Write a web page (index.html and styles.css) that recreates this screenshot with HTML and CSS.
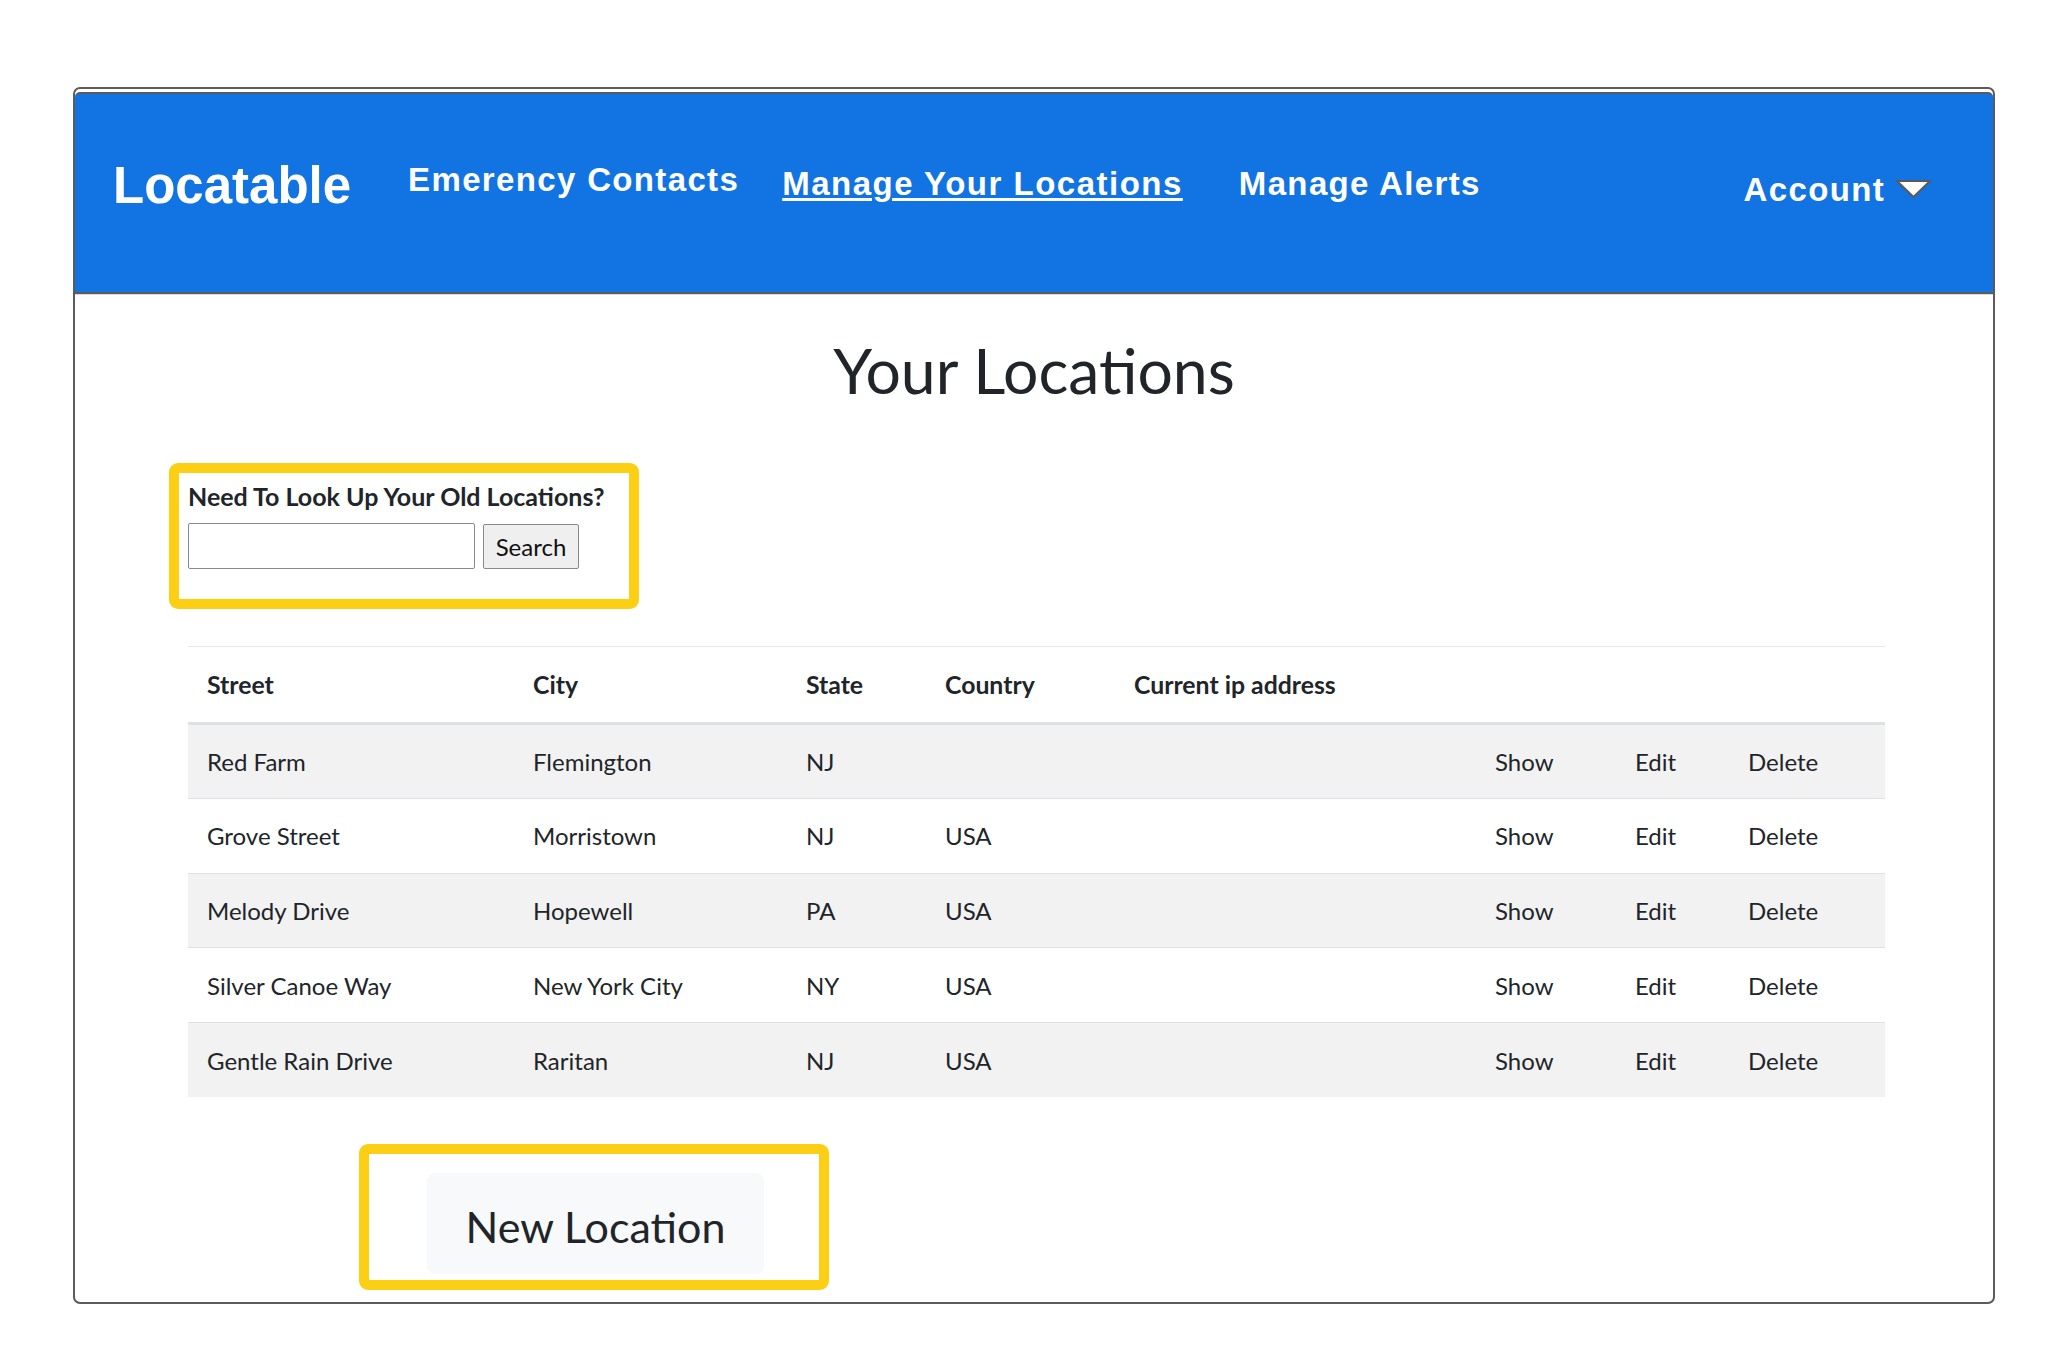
FILE: index.html
```html
<!DOCTYPE html>
<html lang="en">
<head>
<meta charset="utf-8">
<title>Your Locations</title>
<link rel="stylesheet" href="styles.css">
</head>
<body>
<div class="frame">
  <header class="navbar">
    <a class="brand" href="#">Locatable</a>
    <a class="nav-link nav-contacts" href="#">Emerency Contacts</a>
    <a class="nav-link nav-locations" href="#">Manage Your Locations</a>
    <a class="nav-link nav-alerts" href="#">Manage Alerts</a>
    <a class="nav-link nav-account" href="#"><span>Account</span><svg class="caret" width="37" height="20" viewBox="0 0 37 20"><polygon points="2,2 35,2 18.5,18" fill="#fff" stroke="#5a5a5a" stroke-width="2" stroke-linejoin="round"/></svg></a>
  </header>
  <main class="content">
    <h1 class="title">Your Locations</h1>
    <div class="highlight search-highlight">
      <form class="search-form">
        <label class="search-label" for="q">Need To Look Up Your Old Locations?</label>
        <div class="search-row">
          <input id="q" class="search-input" type="text">
          <button class="search-btn" type="button">Search</button>
        </div>
      </form>
    </div>
    <table class="locations">
      <colgroup>
        <col class="c-street"><col class="c-city"><col class="c-state"><col class="c-country"><col class="c-ip"><col class="c-show"><col class="c-edit"><col class="c-delete">
      </colgroup>
      <thead>
        <tr><th>Street</th><th>City</th><th>State</th><th>Country</th><th colspan="4">Current ip address</th></tr>
      </thead>
      <tbody>
        <tr><td>Red Farm</td><td>Flemington</td><td>NJ</td><td></td><td></td><td><a href="#">Show</a></td><td><a href="#">Edit</a></td><td><a href="#">Delete</a></td></tr>
        <tr><td>Grove Street</td><td>Morristown</td><td>NJ</td><td>USA</td><td></td><td><a href="#">Show</a></td><td><a href="#">Edit</a></td><td><a href="#">Delete</a></td></tr>
        <tr><td>Melody Drive</td><td>Hopewell</td><td>PA</td><td>USA</td><td></td><td><a href="#">Show</a></td><td><a href="#">Edit</a></td><td><a href="#">Delete</a></td></tr>
        <tr><td>Silver Canoe Way</td><td>New York City</td><td>NY</td><td>USA</td><td></td><td><a href="#">Show</a></td><td><a href="#">Edit</a></td><td><a href="#">Delete</a></td></tr>
        <tr><td>Gentle Rain Drive</td><td>Raritan</td><td>NJ</td><td>USA</td><td></td><td><a href="#">Show</a></td><td><a href="#">Edit</a></td><td><a href="#">Delete</a></td></tr>
      </tbody>
    </table>
    <div class="highlight new-highlight">
      <a class="new-btn" href="#">New Location</a>
    </div>
  </main>
</div>
</body>
</html>
```
FILE: styles.css
```css
* { box-sizing: border-box; }
html, body { margin: 0; padding: 0; background: #fff; }
body { font-family: Lato, "Open Sans", sans-serif; color: #212529; }

.frame {
  margin: 87px 0 0 73px;
  width: 1922px;
  border: 2px solid #5b5b5b;
  border-radius: 7px;
  padding-bottom: 12px;
  overflow: hidden;
}

.navbar {
  display: flex;
  align-items: flex-start;
  margin-top: 3px;
  height: 202px;
  background: #1273e3;
  border-top: 2px solid #5b5b5b;
  border-bottom: 2px solid #5b5b5b;
  border-radius: 5px 5px 0 0;
  padding: 66px 61px 0 38px;
  font-family: "Liberation Sans", Arial, sans-serif;
  font-weight: bold;
  box-shadow: 0 1px 0 #dcdcdc;
}
.navbar a { color: #fff; text-decoration: none; line-height: 1; white-space: nowrap; }
.brand { font-size: 51px; }
.nav-link { font-size: 33px; letter-spacing: 1.35px; }
.nav-contacts { margin: 3px 0 0 57px; }
.nav-locations {
  margin: 7px 0 0 43px;
  text-decoration: underline !important;
  text-decoration-thickness: 3px !important;
  text-underline-offset: 3px;
  letter-spacing: 1.5px;
}
.nav-alerts { margin: 7px 0 0 56px; }
.nav-account { margin: 13px 0 0 auto; display: inline-flex; align-items: flex-start; }
.caret { margin: 6px 0 0 10px; }

.title {
  margin: 38px 0 0;
  text-align: center;
  font-size: 62.5px;
  font-weight: 400;
  line-height: 1.2;
}

.highlight {
  width: 470px;
  height: 146px;
  border: 10px solid #fcce14;
  border-radius: 9px;
}
.search-highlight { margin: 56px 0 0 94px; padding: 8px 0 0 9px; }
.search-label { display: block; font-size: 25px; font-weight: 700; line-height: 1.2; }
.search-row { display: flex; align-items: flex-start; gap: 8px; margin-top: 12px; }
.search-input {
  width: 287px; height: 46px;
  border: 1px solid #8a8a8a; border-radius: 2px;
  background: #fff; margin: 0;
}
.search-btn {
  width: 96px; height: 45px; margin: 1px 0 0;
  background: #efefef; border: 1px solid #8a8a8a; border-radius: 2px;
  font-family: Lato, "Open Sans", sans-serif; font-size: 24px; color: #111;
  padding: 0;
}

.locations {
  margin: 37px 0 0 113px;
  width: 1697px;
  border-collapse: collapse;
  table-layout: fixed;
  font-size: 24px;
}
.c-street { width: 326px; }
.c-city { width: 273px; }
.c-state { width: 139px; }
.c-country { width: 189px; }
.c-ip { width: 361px; }
.c-show { width: 140px; }
.c-edit { width: 113px; }
.c-delete { width: 156px; }
.locations th {
  text-align: left; font-weight: 700; font-size: 24.8px;
  height: 77px; padding: 0 0 0 19px;
  border-top: 1px solid #e4e7eb;
  border-bottom: 3px solid #dee2e6;
  vertical-align: middle;
}
.locations td {
  height: 74.8px; padding: 0 0 0 19px;
  border-top: 1px solid #dee2e6;
  vertical-align: middle;
}
.locations tbody tr:nth-child(odd) { background: #f2f2f2; }
.locations a { color: #212529; text-decoration: none; }

.new-highlight { margin: 47px 0 0 284px; padding: 19px 0 0 58px; }
.new-btn {
  display: flex; align-items: center; justify-content: center;
  width: 337px; height: 101px;
  padding-top: 6px;
  background: #f8f9fa; border-radius: 8px;
  font-size: 43px; color: #212529; text-decoration: none;
}
```
